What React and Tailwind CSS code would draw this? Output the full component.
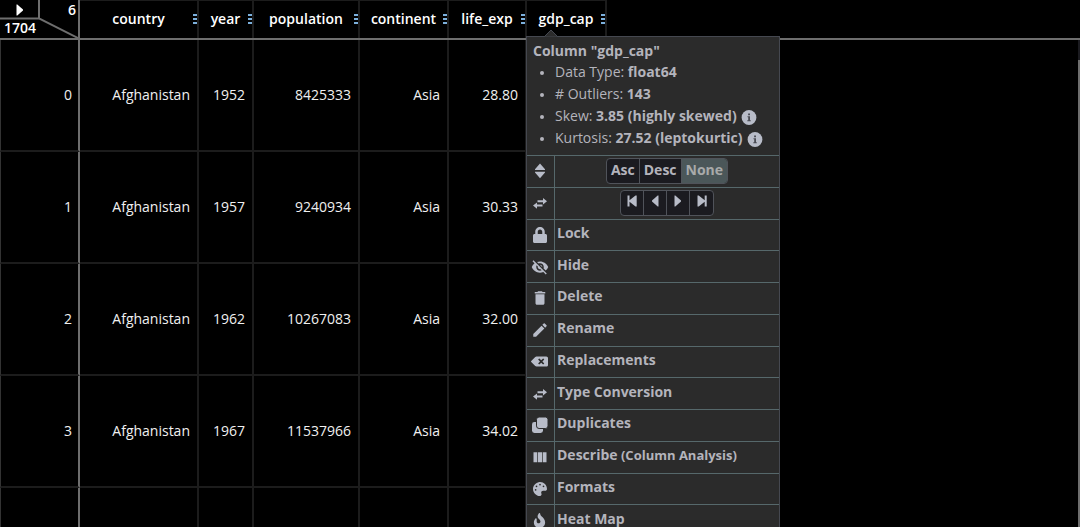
import React, { useState } from 'react';
import { MdVisibilityOff, MdDelete, MdEdit } from 'react-icons/md';
import { FaBackspace, FaFire, FaLock, FaPalette } from 'react-icons/fa';

const COLUMNS = [
  { name: 'country', width: 'w-[119px]' },
  { name: 'year', width: 'w-[55px]' },
  { name: 'population', width: 'w-[106px]' },
  { name: 'continent', width: 'w-[89px]' },
  { name: 'life_exp', width: 'w-[78px]' },
  { name: 'gdp_cap', width: 'w-[80px]' },
];

const ROWS = [
  ['Afghanistan', '1952', '8425333', 'Asia', '28.80', ''],
  ['Afghanistan', '1957', '9240934', 'Asia', '30.33', ''],
  ['Afghanistan', '1962', '10267083', 'Asia', '32.00', ''],
  ['Afghanistan', '1967', '11537966', 'Asia', '34.02', ''],
  ['', '', '', '', '', ''],
];

function Icon({ path }) {
  return (
    <svg className="w-4 h-4" viewBox="0 0 16 16" fill="currentColor">
      <path d={path} />
    </svg>
  );
}

const PATHS = {
  sort: 'M8 .5L13 6.3v.8H3v-.8zM3 8.7h10v.8L8 15.3 3 9.5z',
  swap: 'M5.5 5.2H11V3l4 3.2-4 3.2V7.2H5.5zM10.5 9.6v2H5v2.2l-4-3.2 4-3.2v2.2z',
  columns: 'M1.5 3.2h3.8v10H1.5zM6 3.2h4v10H6zM10.7 3.2h3.8v10h-3.8z',
  left: 'M11.5 2.5v11h-.8L5 8.6V7.4l5.7-4.9z',
  right: 'M4.5 2.5v11h.8L11 8.6V7.4L5.3 2.5z',
  first: 'M3.5 2.5h2v4.8l6-4.8h1.2v11h-1.2l-6-4.8v4.8h-2z',
  last: 'M12.7 2.5h-2v4.8l-6-4.8H3.5v11h1.2l6-4.8v4.8h2z',
};

function DuplicateIcon() {
  return (
    <svg className="w-4 h-4" viewBox="0 0 16 16" fill="currentColor">
      <rect x="0" y="5" width="11" height="11" rx="2.4" />
      <rect x="4.5" y="0" width="11.5" height="11.5" rx="2.6" stroke="#2b2b2b" />
    </svg>
  );
}

function InfoIcon() {
  return (
    <svg className="inline-block w-4 h-4 ml-1" viewBox="0 0 16 16">
      <circle cx="8" cy="8.5" r="7.4" fill="#b8bcc8" />
      <path d="M7.1 4.4h1.9v1.8H7.1zM6.5 7.2H9v4h.8v1.1H6.3v-1.1h.9V8.3h-.7z" fill="#4a4c54" />
    </svg>
  );
}

function MenuDots() {
  return (
    <svg className="w-1 h-3" viewBox="0 0 4 12" fill="#7cb0dc">
      <path d="M0 1h4v2H0zM0 5h4v2H0zM0 9h4v2H0z" />
    </svg>
  );
}

const ACTIONS = [
  { label: 'Lock', icon: <FaLock size={16} /> },
  { label: 'Hide', icon: <MdVisibilityOff size={18} /> },
  { label: 'Delete', icon: <MdDelete size={18} /> },
  { label: 'Rename', icon: <MdEdit size={18} /> },
  { label: 'Replacements', icon: <FaBackspace size={17} /> },
  { label: 'Type Conversion', icon: <Icon path={PATHS.swap} /> },
  { label: 'Duplicates', icon: <DuplicateIcon /> },
  { label: 'Describe', note: '(Column Analysis)', icon: <Icon path={PATHS.columns} /> },
  { label: 'Formats', icon: <FaPalette size={14} /> },
  { label: 'Heat Map', icon: <FaFire size={15} /> },
];

const MOVES = [
  { label: 'Move to front', path: PATHS.first },
  { label: 'Move left', path: PATHS.left },
  { label: 'Move right', path: PATHS.right },
  { label: 'Move to back', path: PATHS.last },
];

function MenuRow({ icon, children }) {
  return (
    <li className="flex border-t border-[#56686b]">
      <span className="flex w-7 shrink-0 items-center justify-center border-r border-[#56686b] pr-0.5 text-[#b8bcc8]">
        {icon}
      </span>
      {children}
    </li>
  );
}

function ColumnMenu() {
  const [sort, setSort] = useState('None');

  return (
    <div className="absolute left-[526px] top-9 w-[254px] border border-[#454850] bg-[#2b2b2b] text-[#b4b4bc]">
      <svg className="absolute -top-2 left-4 w-4 h-2" viewBox="0 0 16 8">
        <path d="M1 8l7-7 7 7z" fill="#2b2b2b" stroke="#454850" />
      </svg>
      <header className="h-[118px] pl-1.5 pt-1 leading-[22px]">
        <h2 className="font-bold leading-5">Column "gdp_cap"</h2>
        <ul className="list-disc pl-[22px] marker:text-xs">
          <li>Data Type: <b>float64</b></li>
          <li># Outliers: <b>143</b></li>
          <li>Skew: <b>3.85 (highly skewed)</b><InfoIcon /></li>
          <li>Kurtosis: <b>27.52 (leptokurtic)</b><InfoIcon /></li>
        </ul>
      </header>
      <ul className="grid h-[381px] auto-rows-fr">
        <MenuRow icon={<Icon path={PATHS.sort} />}>
          <div className="flex flex-1 items-center justify-center">
            <div className="flex h-[26px] divide-x divide-[#50535a] overflow-hidden rounded border border-[#50535a] bg-[#1b1b20]">
              {['Asc', 'Desc', 'None'].map((dir) => (
                <button
                  key={dir}
                  onClick={() => setSort(dir)}
                  className={`px-1 pb-0.5 font-bold leading-5 ${sort === dir ? 'bg-[#4b5759] text-[#a8aaaa]' : ''}`}
                >
                  {dir}
                </button>
              ))}
            </div>
          </div>
        </MenuRow>
        <MenuRow icon={<Icon path={PATHS.swap} />}>
          <div className="flex flex-1 items-center justify-center">
            <div className="flex h-[26px] divide-x divide-[#50535a] rounded border border-[#50535a] bg-[#1b1b20] text-[#b8bcc8]">
              {MOVES.map(({ label, path }) => (
                <button key={label} aria-label={label} className="flex w-[23px] items-center justify-center pb-1">
                  <Icon path={path} />
                </button>
              ))}
            </div>
          </div>
        </MenuRow>
        {ACTIONS.map(({ label, note, icon }) => (
          <MenuRow key={label} icon={icon}>
            <button className="flex-1 pb-1 pl-0.5 text-left font-bold leading-5">
              {label}
              {note && <span className="text-[13px]"> {note}</span>}
            </button>
          </MenuRow>
        ))}
      </ul>
    </div>
  );
}

export default function App() {
  return (
    <div className="relative h-screen overflow-hidden bg-black font-['Open_Sans','Noto_Sans',sans-serif] text-sm text-[#f0f0f0]">
      <table className="w-full table-fixed border-separate border-spacing-0">
        <thead>
          <tr className="h-10">
            <th className="relative w-20 border-b-2 border-r-2 border-[#6e6e6e] p-0 font-semibold text-white">
              <svg className="absolute inset-0 h-full w-full" viewBox="0 0 78 38" preserveAspectRatio="none">
                <path d="M0 18.5h39M39 0v18.5L78 38" fill="none" stroke="#6e6e6e" strokeWidth="2" />
              </svg>
              <button aria-label="Open menu" className="absolute left-3 top-0.5">
                <Icon path={PATHS.right} />
              </button>
              <span className="absolute right-0.5 top-0 leading-5">6</span>
              <span className="absolute bottom-0 left-1 leading-5">1704</span>
            </th>
            {COLUMNS.map(({ name, width }) => (
              <th key={name} className={`${width} border-b-2 border-b-[#6e6e6e] p-0 font-semibold text-white`}>
                <div className="flex h-[38px] items-center border-r-2 border-t border-[#1c1c1c] pb-0.5 pl-1">
                  <span className="flex-1 text-center">{name}</span>
                  <MenuDots />
                </div>
              </th>
            ))}
            <th className="border-b-2 border-[#6e6e6e] p-0" />
          </tr>
        </thead>
        <tbody>
          {ROWS.map((row, i) => (
            <tr key={i} className="h-28">
              <td className="border-b-2 border-l border-r-2 border-b-[#1c1c1c] border-l-[#333333] border-r-[#6e6e6e] p-0 pr-1.5 text-right font-medium">
                {row[0] && i}
              </td>
              {row.map((value, j) => (
                <td key={j} className="border-b-2 border-r-2 border-[#1c1c1c] p-0 pr-[7px] text-right font-medium">
                  {value}
                </td>
              ))}
              <td />
            </tr>
          ))}
        </tbody>
      </table>
      <div className="absolute bottom-0 right-0 top-10 w-0.5 bg-[#6e6e6e]">
        <div className="h-5 bg-[#1b1b20]" />
      </div>
      <ColumnMenu />
    </div>
  );
}
